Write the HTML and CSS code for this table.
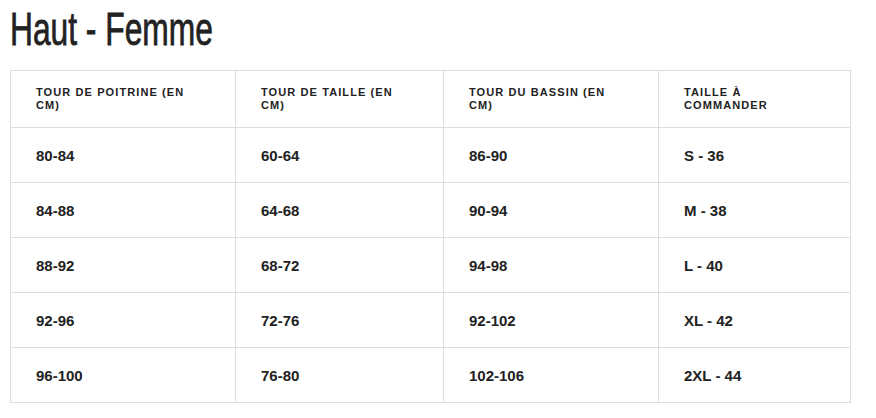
FILE: index.html
```html
<!DOCTYPE html>
<html lang="fr">
<head>
<meta charset="utf-8">
<title>Haut - Femme</title>
<link rel="stylesheet" href="styles.css">
</head>
<body>
<div class="page">
  <h1 class="title"><span class="title-text">Haut - Femme</span></h1>
  <table class="sizes">
    <colgroup>
      <col class="c1"><col class="c2"><col class="c3"><col class="c4">
    </colgroup>
    <thead>
      <tr>
        <th>Tour de poitrine (en cm)</th>
        <th>Tour de taille (en cm)</th>
        <th>Tour du bassin (en cm)</th>
        <th>Taille à commander</th>
      </tr>
    </thead>
    <tbody>
      <tr><td>80-84</td><td>60-64</td><td>86-90</td><td>S - 36</td></tr>
      <tr><td>84-88</td><td>64-68</td><td>90-94</td><td>M - 38</td></tr>
      <tr><td>88-92</td><td>68-72</td><td>94-98</td><td>L - 40</td></tr>
      <tr><td>92-96</td><td>72-76</td><td>92-102</td><td>XL - 42</td></tr>
      <tr><td>96-100</td><td>76-80</td><td>102-106</td><td>2XL - 44</td></tr>
    </tbody>
  </table>
</div>
</body>
</html>
```
FILE: styles.css
```css
html, body {
  margin: 0;
  padding: 0;
  background: #fff;
}
.page {
  padding: 0 10px;
  font-family: "Liberation Sans", Arial, sans-serif;
  color: #222;
}
.title {
  margin: 0;
  padding-top: 3px;
  height: 67px;
  font-family: "Liberation Sans", sans-serif;
  font-weight: normal;
  font-size: 46px;
  line-height: 52px;
  color: #222;
}
.title-text {
  display: inline-block;
  transform: scaleX(0.69);
  transform-origin: left center;
  -webkit-text-stroke: 0.8px #222;
}
.sizes {
  border-collapse: collapse;
  width: 840px;
  table-layout: fixed;
}
.c1 { width: 225px; }
.c2 { width: 208px; }
.c3 { width: 215px; }
.c4 { width: 192px; }
.sizes th, .sizes td {
  border: 1px solid #ddd;
  text-align: left;
  vertical-align: middle;
  padding: 0 35px 0 25px;
}
.sizes th {
  font-weight: bold;
  font-size: 11px;
  line-height: 13px;
  letter-spacing: 1.1px;
  text-transform: uppercase;
  padding-top: 15px;
  padding-bottom: 15px;
  height: 26px;
}
.sizes td {
  font-weight: bold;
  font-size: 15px;
  height: 55px;
  box-sizing: border-box;
}
```
